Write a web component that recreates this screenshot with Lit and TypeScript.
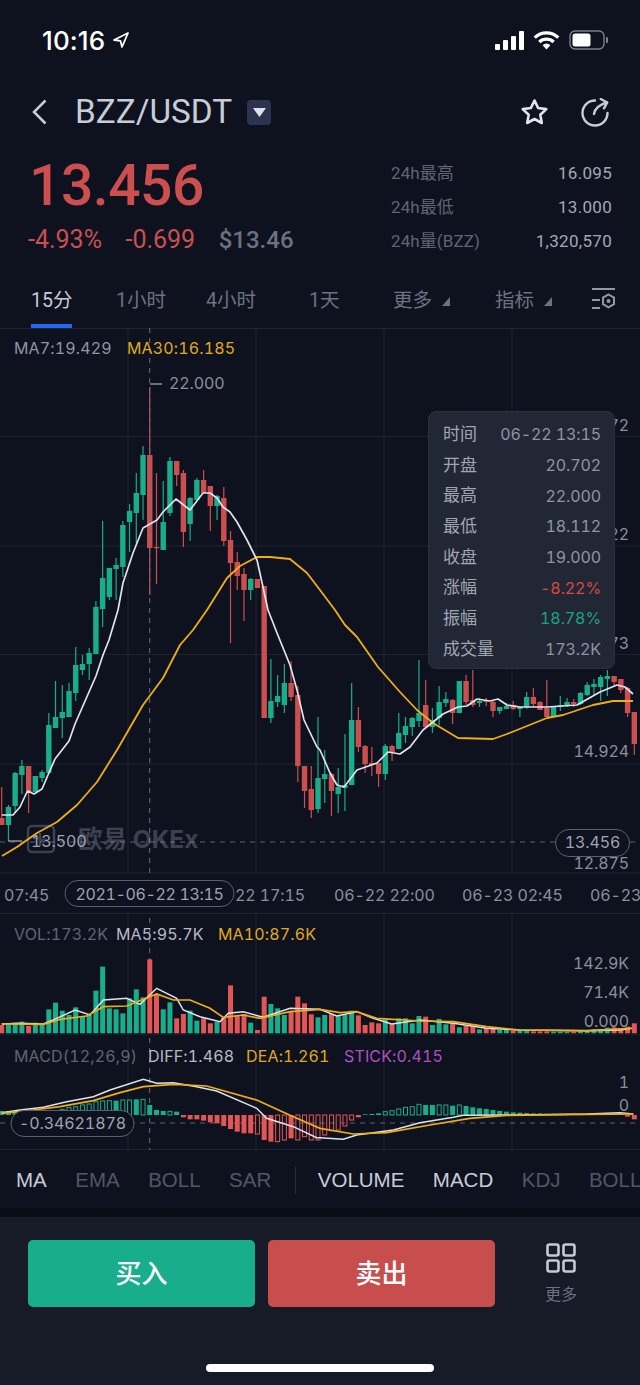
import { LitElement, html, css, svg } from "lit";
import { customElement } from "lit/decorators.js";

type C = [string, number, number, number, number];
const candles: C[] = [
["r",818,825,787,825],["g",807,825,805,841],["g",773,806,772,813],["g",766,775,760,794],["r",766,792,766,813],["g",776,792,776,792],["g",772,778,770,782],["g",725,773,713,773],["g",717,728,681,728],["g",712,718,685,738],["g",691,717,683,717],["g",665,693,647,701],["g",664,670,655,675],["g",653,664,648,680],["g",607,654,601,654],["g",578,609,521,627],["g",568,597,568,600],["g",565,569,558,600],["g",525,567,521,577],["g",511,522,504,552],["g",493,513,473,543],["g",455,495,446,520],
["r",455,548,387,595],["r",547,548,473,584],["g",522,550,481,550],["g",461,513,457,516],["r",461,475,461,486],["r",473,532,470,547],["g",498,524,497,541],["g",480,500,478,500],["r",480,493,470,493],["r",486,506,486,531],["g",496,506,495,520],["r",498,541,487,546],["r",540,563,531,643],["r",562,576,552,590],["r",574,590,568,621],["g",579,590,578,600],["r",579,588,579,588],["r",586,718,586,718],["g",701,718,659,723],["g",696,702,675,707],["g",683,705,664,713],["r",683,697,661,701],["r",695,766,686,782],["r",766,791,766,808],["r",789,810,766,818],["g",778,809,717,813],
["g",774,779,750,803],["r",774,791,773,816],["g",787,794,768,813],["g",785,788,734,811],["g",720,785,683,785],["r",720,747,707,752],["r",746,764,745,773],["r",763,765,747,776],["r",763,774,763,787],["g",746,774,744,780],["r",746,752,745,761],["g",733,749,713,749],["g",726,735,717,743],["g",718,727,717,736],["g",713,721,660,727],["r",705,727,680,728],["g",720,727,708,733],["g",702,718,686,725],["g",699,703,692,707],["r",700,713,699,724],["g",681,713,681,713],["r",681,702,675,705],["r",700,705,670,707],["g",701,703,698,707],["r",700,702,698,706],["r",702,711,700,717],["g",707,711,707,714],["g",706,709,703,709],["r",705,709,701,710],["g",707,709,706,717],["g",697,707,692,709],["r",697,704,688,707],["r",702,710,701,710],["r",708,717,680,717],["g",707,717,707,717],["g",705,707,696,711],["g",702,705,698,707],["r",702,704,699,707],["g",693,704,692,705],["g",685,695,682,696],["g",684,687,679,695],["g",677,687,675,701],["g",676,679,670,696],["r",676,682,676,687],["r",679,690,679,693],["r",688,713,687,717],["r",712,744,712,755],
];
const cx = (i: number) => 1.7 + 6.73 * i;

const ma7 = "2,815 13,815 20,807 26,794 28,791 34,794 42,789 48,775 55,759 62,750 69,741 75,724 82,708 89,692 96,676 103,655 109,640 118,610 123,583 133,553 143,528 150,524 157,520 163,512 176,499 190,510 203,493 210,493 217,498 223,507 230,512 237,522 247,540 257,560 263,587 268,610 277,633 290,665 297,690 304,720 317,747 320,750 330,773 337,785 344,787 357,770 377,763 388,752 400,754 410,747 423,730 443,714 458,707 467,706 477,699 490,701 498,699 507,705 520,707 547,707 577,705 600,692 617,685 625,687 633,694";
const ma30 = "2,856 17,847 37,833 57,822 77,805 97,782 117,750 143,705 163,678 180,645 193,630 207,610 227,578 240,566 257,557 270,557 290,559 307,573 320,590 335,610 345,625 357,637 378,667 400,692 417,710 433,723 458,738 493,739 507,734 547,718 563,715 593,705 613,701 633,701";

const volTops = [345,345,338,335,348,338,345,298,278,302,315,292,318,315,242,170,295,298,310,265,238,262,148,255,298,277,325,312,302,332,325,340,335,322,226,318,312,338,360,260,282,295,315,305,260,280,313,322,315,312,318,315,302,316,345,337,340,328,342,325,325,340,318,320,345,327,343,338,352,348,348,358,355,355,360,358,362,362,362,364,364,364,365,365,365,365,364,362,358,358,353,352,355,350,340];
const volY = (zy: number) => 910 + zy / 3;

const toPts = (raw: number[][], off: number) => raw.map(([x, y]) => `${off + x / 3},${volY(y)}`).join(" ");
const volMa5 = toPts([[5,342],[60,340],[130,342],[170,325],[225,300],[270,315],[310,270],[380,265],[420,283],[470,235],[530,265],[550,300],[600,320],[660,335],[685,310],[730,305],[790,322],[870,295],[960,298]], 0) + " " + toPts([[0,298],[50,318],[110,305],[160,325],[215,342],[300,330],[400,340],[500,355],[600,360],[800,362],[900,360],[935,355]], 320);
const volMa10 = toPts([[5,342],[130,343],[180,328],[260,318],[310,290],[380,288],[470,252],[520,270],[570,270],[630,295],[670,322],[730,315],[780,325],[870,305],[960,298]], 0) + " " + toPts([[0,298],[60,308],[110,305],[170,325],[300,333],[400,335],[500,350],[600,360],[800,362],[935,355]], 320);
const diff = toPts([[5,608],[60,600],[130,592],[200,575],[280,560],[330,540],[430,508],[470,520],[520,518],[590,530],[650,543],[770,595],[800,625],[880,650],[950,683]], 0) + " " + toPts([[0,683],[70,688],[110,675],[220,660],[300,638],[400,622],[430,616],[600,615],[800,612],[900,608],[940,612]], 320);
const dea = toPts([[5,610],[100,600],[180,590],[280,572],[360,548],[430,530],[520,523],[620,528],[770,570],[880,620],[960,655]], 0) + " " + toPts([[0,655],[100,672],[200,668],[330,645],[450,625],[560,616],[800,613],[940,612]], 320);

const macd: [number, number][] = [[603,0],[603,0],[603,0],[603,0],[604,0],[604,0],[604,0],[604,0],[603,0],[598,1],[592,1],[590,1],[585,1],[582,1],[575,1],[573,1],[572,1],[572,0],[570,1],[570,1],[568,0],[568,1],[585,0],[600,0],[603,0],[604,1],[605,0],[622,0],[628,0],[628,0],[632,0],[637,0],[640,0],[648,0],[657,0],[665,0],[670,0],[670,0],[672,1],[690,0],[695,0],[695,1],[690,1],[685,0],[690,1],[680,1],[690,1],[690,1],[675,1],[662,1],[660,1],[648,1],[630,1],[622,0],[613,0],[612,0],[610,0],[605,1],[602,1],[597,1],[592,1],[590,1],[583,1],[585,0],[585,0],[585,1],[585,1],[587,0],[585,1],[588,0],[592,0],[595,0],[597,0],[600,0],[603,0],[605,0],[607,0],[608,0],[609,0],[610,0],[610,0],[611,0],[611,0],[611,0],[611,0],[611,0],[611,0],[611,0],[611,0],[610,0],[610,0],[610,0],[612,0],[620,0],[628,0]];

const GREEN = "#18ad8b", RED = "#cc4f4f", VRED = "#e25656";
const vlines = [128, 256, 384, 512];
const hlines = [436.5, 546, 654.5, 764, 873];

const tipRows: [string, string, string?][] = [
  ["时间", "06-22 13:15"], ["开盘", "20.702"], ["最高", "22.000"], ["最低", "18.112"],
  ["收盘", "19.000"], ["涨幅", "-8.22%", "red"], ["振幅", "18.78%", "green"], ["成交量", "173.2K"],
];

@customElement("app-root")
export class AppRoot extends LitElement {
  static styles = css`
    :host { display: block; width: 640px; height: 1385px; overflow: hidden; background: #0e121f; color: #c8ccd6;
      font-family: Roboto, "Noto Sans CJK SC", sans-serif; }
    .status { height: 80px; display: flex; align-items: center; padding: 0 32px 0 42px; box-sizing: border-box; justify-content: space-between; }
    .time { font: 500 26px Inter, sans-serif; color: #fff; display: flex; align-items: center; gap: 7px; letter-spacing: 0.1px; }
    .sys { display: flex; align-items: center; gap: 9px; }
    .title { height: 64px; display: flex; align-items: center; padding: 0 30px 0 32px; }
    .pair { font-size: 33.3px; margin-left: 28px; color: #c8ccd6; line-height: 1; }
    .drop { width: 24px; height: 25px; border-radius: 4px; background: #2b3350; margin-left: 15px; display: flex; align-items: center; justify-content: center; }
    .title-actions { margin-left: auto; display: flex; gap: 31.5px; align-items: center; }
    .quote { display: flex; justify-content: space-between; padding: 12px 28px 0 28px; height: 128px; box-sizing: border-box; }
    .price { font-size: 57px; line-height: 60px; color: #cc4f4f; font-weight: 500; margin-left: 1px; letter-spacing: -0.5px; }
    .sub { display: flex; gap: 23.5px; font-size: 25px; line-height: 48px; }
    .sub .neg { color: #cc4f4f; }
    .sub .usd { color: #6c7280; font-weight: 500; font-size: 24px; }
    .stats { width: 221px; display: grid; grid-template-columns: auto auto; grid-auto-rows: 34px; justify-content: space-between; align-items: center; font-size: 17px; }
    .stats span { display: block; height: 22px; line-height: 22px; }
    .stats .k { color: #5f6572; letter-spacing: 0.1px; }
    .stats .v { color: #a3a8b2; text-align: right; letter-spacing: 0.3px; }
    .tabs { height: 56px; display: grid; grid-template-columns: 85px 90px 103px 84px 102px 97px auto; padding-left: 31px; font-size: 19.5px; color: #6c7280; align-items: center; box-sizing: border-box; }
    .tab { display: flex; align-items: center; height: 56px; position: relative; padding-bottom: 3px; box-sizing: border-box; }
    .tab.on { color: #c8ccd6; }
    .tab.on::after { content: ""; position: absolute; left: 0; width: 41px; bottom: 0; height: 4px; background: #2468f2; }
    .tri { margin-left: 10px; margin-top: 5px; }
    .chart { position: relative; height: 822px; }
    .chart svg { display: block; }
    .lbl { font-family: Inter, sans-serif; font-size: 16px; letter-spacing: -0.1px; font-variant-numeric: tabular-nums; }
    .legend { letter-spacing: 0.15px; }
    .tight { letter-spacing: -0.35px; }
    .mark { font-family: Inter, "Noto Sans CJK SC", sans-serif; font-size: 24.5px; font-weight: 700; }
    .tip { position: absolute; left: 428px; top: 83px; width: 187px; height: 258px; box-sizing: border-box; padding: 7px 13px 7px 14px; background: #222736; border: 1px solid #2b3040; border-radius: 8px; display: grid; grid-auto-rows: 30.7px; align-items: center; font-size: 17px; color: #a0a6b1; }
    .row { display: flex; justify-content: space-between; align-items: center; }
    .row .key { padding-bottom: 4px; }
    .row .val { font-family: Inter, sans-serif; font-size: 16px; letter-spacing: -0.1px; color: #8f95a2; font-variant-numeric: tabular-nums; }
    .row .val.red { color: #d9493f; }
    .row .val.green { color: #16a581; }
    .ind { height: 58px; display: flex; align-items: center; padding: 2px 0 0 16px; box-sizing: border-box; gap: 28.5px; font: 20.5px "Liberation Sans", sans-serif; color: #505767; white-space: nowrap; overflow: hidden; }
    .ind .on { color: #c8ccd6; }
    .sep { width: 1px; height: 27px; background: #2a2f3d; margin: 0 -6.5px 0 -5px; flex: none; }
    .gap { height: 10px; background: #090c14; border-bottom: 1px solid #1c212e; box-sizing: border-box; }
    .bottom { height: 167px; background: #161b27; padding: 22px 0 0 28px; box-sizing: border-box; display: flex; position: relative; }
    .btn { width: 227px; height: 67px; border-radius: 5px; color: #fff; font-size: 26px; font-weight: 500; display: flex; align-items: center; justify-content: center; padding-bottom: 4px; box-sizing: border-box; }
    .buy { background: #18ae8c; margin-right: 13px; }
    .sell { background: #c84d4d; }
    .more { margin-left: 49px; width: 34px; display: flex; flex-direction: column; align-items: center; gap: 8px; padding-top: 3px; color: #6c7280; font-size: 16px; white-space: nowrap; }
    .home { position: absolute; left: 206px; bottom: 13px; width: 228px; height: 8px; border-radius: 4px; background: #fff; }
  `;

  private chart() {
    const yDash = (y: number, x1 = 0, x2 = 640) => svg`<line x1=${x1} x2=${x2} y1=${y} y2=${y} stroke="#5a6070" stroke-dasharray="5 5"/>`;
    const T = (x: number, y: number, t: string, fill: string, anchor = "start", cls = "") =>
      svg`<text class="lbl ${cls}" x=${x} y=${y} fill=${fill} text-anchor=${anchor}>${t}</text>`;
    const gray = "#8a8f9c", mid = "#8f95a2", yel = "#e0a81c", light = "#b6bac4";
    return svg`<svg width="640" height="822" viewBox="0 328 640 822">
      <rect x="0" y="328" width="640" height="822" fill="#0e121f"/>
      <line x1="0" x2="640" y1="328.5" y2="328.5" stroke="#1f2432"/>
      ${hlines.map((y) => svg`<line x1="0" x2="640" y1=${y} y2=${y} stroke="#1f2432" stroke-width="1.2"/>`)}
      ${vlines.map((x) => svg`<line x1=${x} x2=${x} y1="328" y2="873" stroke="#1f2432"/><line x1=${x} x2=${x} y1="913" y2="1150" stroke="#1f2432"/>`)}
      <line x1="0" x2="640" y1="913.5" y2="913.5" stroke="#1f2432"/>
      <line x1="0" x2="640" y1="1034.5" y2="1034.5" stroke="#171c29"/>
      <line x1="0" x2="640" y1="1150" y2="1150" stroke="#1f2432" stroke-width="2"/>

      ${candles.map((c, i) => {
        const col = c[0] === "g" ? GREEN : RED, x = cx(i);
        return svg`<line x1=${x} x2=${x} y1=${c[3]} y2=${c[4]} stroke=${col} stroke-width="1.2"/><rect x=${x - 2.7} y=${c[1]} width="5.4" height=${Math.max(1.2, c[2] - c[1])} fill=${col}/>`;
      })}
      ${yDash(842)}
      <line x1="149.7" x2="149.7" y1="328" y2="1150" stroke="#6a7080" stroke-dasharray="5 5"/>
      <polyline points=${ma30} fill="none" stroke="#f0ae14" stroke-width="1.8" stroke-linejoin="round"/>
      <polyline points=${ma7} fill="none" stroke="#dfe2ea" stroke-width="1.7" stroke-linejoin="round"/>

      <g opacity="0.3" fill="#a9afbd">
        <rect x="28" y="826" width="26" height="26" rx="4" fill="none" stroke="#a9afbd" stroke-width="2.5"/>
        <path d="M33 838h7v-5M47 840h-7v6" fill="none" stroke="#a9afbd" stroke-width="2.5"/>
        <text class="mark" x="78" y="848">欧易 OKEx</text>
      </g>
      <line x1="8" x2="22" y1="841" y2="841" stroke="#8a8f9c" stroke-width="1.5"/>
      ${T(31, 847, "13.500", "#9ea3af")}

      ${T(14, 354, "MA7:19.429", mid, "start", "legend")}
      ${T(127, 354, "MA30:16.185", yel, "start", "legend")}
      <line x1="150" x2="162" y1="384" y2="384" stroke="#8a8f9c" stroke-width="1.5"/>
      ${T(169, 389, "22.000", gray)}
      ${T(629, 431, "21.072", gray, "end")}
      ${T(629, 540, "19.022", gray, "end")}
      ${T(629, 649, "16.973", gray, "end")}
      ${T(629, 757, "14.924", gray, "end")}
      ${T(629, 869, "12.875", gray, "end")}
      <rect x="555.5" y="829.5" width="74" height="27" rx="13.5" fill="#0e121f" stroke="#5a6070"/>
      ${T(592.5, 848, "13.456", "#9ea3af", "middle")}

      <rect x="0" y="874" width="640" height="39" fill="#0e121f"/>
      ${T(4, 901, "07:45", gray)}
      ${T(235, 901, "22 17:15", gray)}
      ${T(334, 901, "06-22 22:00", gray)}
      ${T(462, 901, "06-23 02:45", gray)}
      ${T(590, 901, "06-23 07:30", gray)}
      <rect x="65" y="880.5" width="169" height="26" rx="13" fill="#0e121f" stroke="#5a6070"/>
      ${T(149.5, 900, "2021-06-22 13:15", "#9ea3af", "middle", "tight")}

      ${T(14, 940, "VOL:173.2K", "#5f6572", "start", "legend")}
      ${T(116, 940, "MA5:95.7K", light, "start", "legend")}
      ${T(218, 940, "MA10:87.6K", yel, "start", "legend")}
      ${volTops.map((t, i) => svg`<rect x=${cx(i) - 2.5} y=${volY(t)} width="5" height=${1033.3 - volY(t)} fill=${candles[i][0] === "g" ? GREEN : VRED}/>`)}
      <polyline points=${volMa5} fill="none" stroke="#dfe2ea" stroke-width="1.5"/>
      <polyline points=${volMa10} fill="none" stroke="#f0ae14" stroke-width="1.7"/>
      ${T(629, 969, "142.9K", gray, "end")}
      ${T(629, 998, "71.4K", gray, "end")}
      ${T(629, 1027, "0.000", gray, "end")}

      ${T(14, 1062, "MACD(12,26,9)", "#5f6572", "start", "legend")}
      ${T(148, 1062, "DIFF:1.468", light, "start", "legend")}
      ${T(246, 1062, "DEA:1.261", yel, "start", "legend")}
      ${T(344, 1062, "STICK:0.415", "#b04fc4", "start", "legend")}
      ${yDash(1123)}
      ${macd.map(([t, h], i) => {
        const top = Math.min(volY(t), 1115), ht = Math.abs(volY(t) - 1115), green = t < 615;
        const col = green ? GREEN : VRED;
        return h
          ? svg`<rect x=${cx(i) - 2} y=${top} width="4" height=${ht} fill="none" stroke=${col} stroke-width="1"/>`
          : svg`<rect x=${cx(i) - 2.5} y=${top} width="5" height=${ht} fill=${col}/>`;
      })}
      <polyline points=${diff} fill="none" stroke="#dfe2ea" stroke-width="1.5"/>
      <polyline points=${dea} fill="none" stroke="#f0ae14" stroke-width="1.7"/>
      ${T(629, 1088, "1", gray, "end")}
      ${T(629, 1111, "0", gray, "end")}
      <rect x="11" y="1110.5" width="123" height="26" rx="13" fill="#0e121f" stroke="#5a6070"/>
      ${T(72.5, 1129, "-0.34621878", "#9ea3af", "middle")}
    </svg>`;
  }

  render() {
    return html`
      <div class="status">
        <div class="time">10:16
          <svg width="18" height="18" viewBox="0 0 18 18"><path d="M16 2 2 9l6.5.9L10 16z" fill="none" stroke="#fff" stroke-width="1.8" stroke-linejoin="round"/></svg>
        </div>
        <div class="sys">
          <svg width="29" height="19" viewBox="0 0 29 19" fill="#fff"><rect x="0" y="13" width="5" height="6" rx="1"/><rect x="8" y="9" width="5" height="10" rx="1"/><rect x="16" y="5" width="5" height="14" rx="1"/><rect x="24" y="0" width="5" height="19" rx="1"/></svg>
          <svg width="27" height="19" viewBox="0 0 27 19"><g fill="none" stroke="#fff" stroke-width="3.2"><path d="M1.7 6.6a17 17 0 0 1 23.6 0"/><path d="M6.3 11a10.500 10.500 0 0 1 14.400 0"/></g><path d="M9.600 14.200a5.600 5.600 0 0 1 7.800 0L13.500 18.600z" fill="#fff"/></svg>
          <svg width="39" height="20" viewBox="0 0 39 20"><rect x="1" y="1" width="34" height="18" rx="5" fill="none" stroke="#7b7f88" stroke-width="1.4"/><rect x="3.500" y="3.500" width="18" height="13" rx="2.500" fill="#fff"/><path d="M37 7v6a3 3 0 0 0 0-6z" fill="#7b7f88"/></svg>
        </div>
      </div>

      <div class="title">
        <svg width="15" height="26" viewBox="0 0 15 26"><path d="M13.500 1.500 2 13l11.500 11.500" fill="none" stroke="#c8ccd6" stroke-width="2.500"/></svg>
        <div class="pair">BZZ/USDT</div>
        <div class="drop"><svg width="13" height="9" viewBox="0 0 13 9"><path d="M0 0h13L6.500 9z" fill="#dde0e8"/></svg></div>
        <div class="title-actions">
          <svg width="29" height="28" viewBox="0 0 29 28"><path d="M14.500 2.500l3.600 7.500 8.200 1.100-6 5.700 1.500 8.200-7.300-4-7.300 4 1.500-8.200-6-5.700 8.200-1.100z" fill="none" stroke="#e2e4ea" stroke-width="2.600" stroke-linejoin="round"/></svg>
          <svg width="30" height="29" viewBox="0 0 30 29"><g fill="none" stroke="#c8ccd6" stroke-width="2.400" stroke-linecap="round" stroke-linejoin="round"><path d="M15 2.500A12.500 12.500 0 1 0 27.500 15"/><path d="M14 16c.8-4.800 4-9 13-11.500"/><path d="M20.700 1l6.500 3.500-3.200 5.800"/></g></svg>
        </div>
      </div>

      <div class="quote">
        <div>
          <div class="price">13.456</div>
          <div class="sub"><span class="neg">-4.93%</span><span class="neg">-0.699</span><span class="usd">$13.46</span></div>
        </div>
        <div class="stats">
          <span class="k">24h最高</span><span class="v">16.095</span>
          <span class="k">24h最低</span><span class="v">13.000</span>
          <span class="k">24h量(BZZ)</span><span class="v">1,320,570</span>
        </div>
      </div>

      <div class="tabs">
        <div class="tab on">15分</div>
        <div class="tab">1小时</div>
        <div class="tab">4小时</div>
        <div class="tab">1天</div>
        <div class="tab">更多<svg class="tri" width="8" height="9" viewBox="0 0 8 9"><path d="M8 0v9H0z" fill="#6c7280"/></svg></div>
        <div class="tab">指标<svg class="tri" width="8" height="9" viewBox="0 0 8 9"><path d="M8 0v9H0z" fill="#6c7280"/></svg></div>
        <div class="tab"><svg width="23" height="22" viewBox="0 0 23 22"><g fill="none" stroke="#9298a4" stroke-width="2"><path d="M0 1h23M0 12h8M0 20h8"/><path d="M16.500 6.500l5.500 3.200v6.400l-5.500 3.200-5.500-3.200V9.700z"/></g><circle cx="16.500" cy="13" r="2" fill="#9298a4"/></svg></div>
      </div>

      <div class="chart">
        ${this.chart()}
        <div class="tip">
          ${tipRows.map(([k, v, c]) => html`<div class="row"><span class="key">${k}</span><span class="val ${c ?? ""}">${v}</span></div>`)}
        </div>
      </div>

      <div class="ind">
        <span class="on">MA</span><span>EMA</span><span>BOLL</span><span>SAR</span><i class="sep"></i>
        <span class="on">VOLUME</span><span class="on">MACD</span><span>KDJ</span><span>BOLL</span>
      </div>
      <div class="gap"></div>
      <div class="bottom">
        <div class="btn buy">买入</div>
        <div class="btn sell">卖出</div>
        <div class="more">
          <svg width="30" height="30" viewBox="0 0 30 30"><g fill="none" stroke="#c5c9d3" stroke-width="2.600"><rect x="1.500" y="1.500" width="11" height="11" rx="2"/><rect x="17.500" y="1.500" width="11" height="11" rx="2"/><rect x="1.500" y="17.500" width="11" height="11" rx="2"/><rect x="17.500" y="17.500" width="11" height="11" rx="2"/></g></svg>
          更多
        </div>
        <div class="home"></div>
      </div>
    `;
  }
}
